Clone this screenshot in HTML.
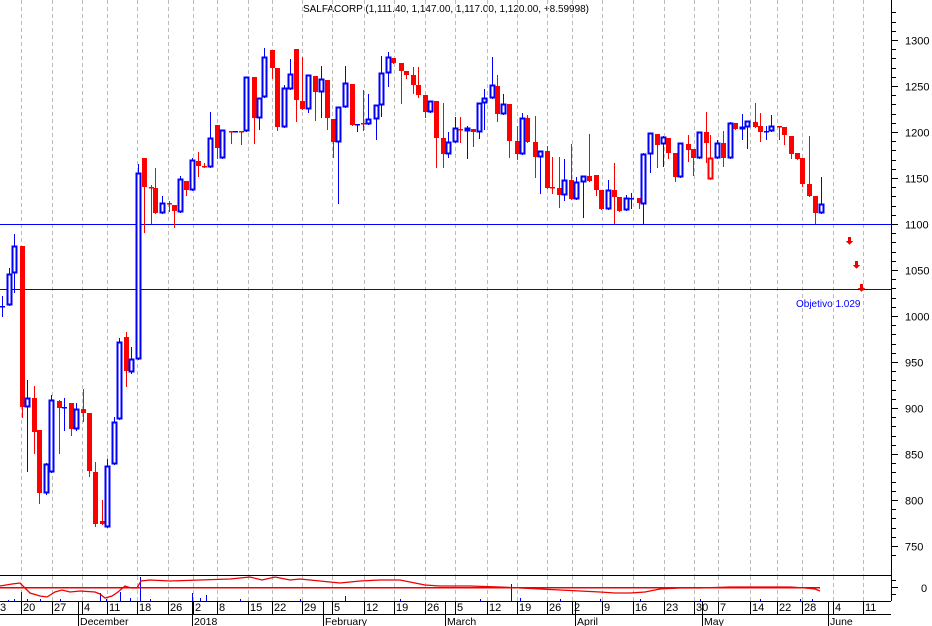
<!DOCTYPE html>
<html><head><meta charset="utf-8"><style>
html,body{margin:0;padding:0;background:#fff;width:932px;height:626px;overflow:hidden}
svg{display:block;font-family:"Liberation Sans",sans-serif}
</style></head><body>
<svg id="s" width="932" height="626" xmlns="http://www.w3.org/2000/svg" shape-rendering="crispEdges">
<text x="303" y="12" font-size="10.5" fill="#000" textLength="286" lengthAdjust="spacingAndGlyphs">SALFACORP (1,111.40, 1,147.00, 1,117.00, 1,120.00, +8.59998)</text>
<g id="grid" stroke="#bbb" stroke-dasharray="4,3"></g>
<line x1="0" y1="224.5" x2="891" y2="224.5" stroke="#0000ff"/>
<line x1="0" y1="289.5" x2="891" y2="289.5" stroke="#0000ff"/>
<g id="c"></g>
<text x="796" y="307" font-size="10" fill="#00f">Objetivo 1.029</text>
<g fill="#e00" stroke="none">
<path d="M848 237h3v4h2l-3.5 4l-3.5-4h2z"/>
<path d="M855 261h3v4h2l-3.5 4l-3.5-4h2z"/>
<path d="M860 284h3v4h2l-3.5 4l-3.5-4h2z"/>
</g>
<line x1="891.5" y1="0" x2="891.5" y2="601" stroke="#000"/>
<line x1="0" y1="575.5" x2="891" y2="575.5" stroke="#000"/>
<line x1="0" y1="601.5" x2="891" y2="601.5" stroke="#000"/>
<line x1="0" y1="614.5" x2="891" y2="614.5" stroke="#000"/>
<g id="ax" stroke="#000"></g>
<g id="lb" font-size="11" fill="#000"></g>
<g id="vol" stroke="#00f"></g>
<line x1="0" y1="587.5" x2="820" y2="587.5" stroke="#e00" stroke-width="1.5"/>
<polyline fill="none" stroke="#e00" stroke-width="1.3" shape-rendering="auto" points="0,586 12,584 20,583 24,587 30,593 40,596 47,597 55,592 62,590 70,592 80,591 95,592 100,594 105,598 112,596 118,592 125,586 131,588 137,588 141,581 150,580 170,581 200,580 230,579 250,577 262,580 275,577 290,580 300,579 320,581 340,583 360,581 380,580 400,580 415,583 425,585 440,586 470,586 500,587 520,588 540,589 560,590 580,591 600,592 615,593 630,593 645,592 660,589 680,588 700,588 730,587 760,587 790,587 805,588 815,589 820,591"/>
</svg>
<script>
var s=document.getElementById('s'),NS='http://www.w3.org/2000/svg';
function el(p,t,a,txt){var e=document.createElementNS(NS,t);for(var k in a)e.setAttribute(k,a[k]);if(txt!=null)e.textContent=txt;document.getElementById(p).appendChild(e);return e;}
var G=[21,52,82,107,137,168,193,217,248,272,302,332,364,394,425,455,487,517,547,572,602,633,664,694,718,750,777,802,833,863];
G.forEach(function(x){el('grid','line',{x1:x+.5,y1:0,x2:x+.5,y2:575});el('grid','line',{x1:x+.5,y1:576,x2:x+.5,y2:601});
el('ax','line',{x1:x+.5,y1:601,x2:x+.5,y2:614});});
var L=["20","27","4","11","18","26","2","8","15","22","29","5","12","19","26","5","12","19","26","2","9","16","23","30","7","14","22","28","4","11"];
el('lb','text',{x:0,y:611,'font-size':11},"3");
G.forEach(function(x,i){el('lb','text',{x:x+2,y:611},L[i]);});
var M=[[78,"December"],[192,"2018"],[323,"February"],[445,"March"],[575,"April"],[702,"May"],[828,"June"]];
M.forEach(function(m){el('ax','line',{x1:m[0]+.5,y1:601,x2:m[0]+.5,y2:626});el('lb','text',{x:m[0]+2,y:625,'font-size':10.5},m[1]);});
for(var p=740;p<=1330;p+=10){var y=Math.round(40+(1300-p)*0.92)+.5;var maj=p%50==0;
el('ax','line',{x1:891,y1:y,x2:maj?898:896,y2:y});
if(maj&&p>=750&&p<=1300)el('lb','text',{x:905,y:y+4},String(p));}
[580,587,594].forEach(function(y){el('ax','line',{x1:891,y1:y+.5,x2:y==587?898:896,y2:y+.5});});
el('lb','text',{x:921,y:592},"0");
var C=[
[2,306,306,296,316,'b'],[9,274,305,268,305,'b'],[14,246,273,234,292,'b'],[22,246,407,246,417,'r'],[27,398,407,380,471,'b'],
[34,398,432,386,453,'r'],[39,430,493,430,503,'r'],[46,464,493,463,494,'b'],[51,400,472,395,472,'b'],[59,401,408,400,453,'r'],
[64,407,407,398,430,'b'],[71,403,429,403,435,'r'],[76,409,429,403,430,'b'],[83,409,413,389,421,'r'],[89,413,471,413,476,'r'],
[95,472,524,462,526,'r'],[102,521,524,500,524,'r'],[107,466,527,459,527,'b'],[114,422,464,417,464,'b'],[119,342,419,338,419,'b'],
[126,337,371,332,386,'r'],[131,359,372,347,373,'b'],[138,173,359,164,359,'b'],[144,158,187,158,232,'r'],[151,187,187,185,223,'r'],
[155,188,213,168,213,'r'],[162,203,213,196,213,'b'],[169,203,203,201,211,'r'],[174,205,211,205,227,'r'],[180,179,212,176,212,'b'],
[186,181,190,181,195,'r'],[192,160,190,158,190,'b'],[198,161,166,152,176,'r'],[204,166,167,163,167,'r'],[210,138,167,112,167,'b'],
[217,125,148,125,158,'r'],[222,130,158,130,158,'b'],[231,131,131,131,143,'r'],[235,131,131,131,131,'b'],[241,131,131,131,144,'r'],
[246,77,131,77,131,'b'],[254,77,118,77,143,'r'],[259,98,118,98,129,'b'],[264,57,97,48,97,'b'],[272,50,68,50,78,'r'],
[277,68,127,68,130,'r'],[284,88,127,85,127,'b'],[290,74,89,59,89,'b'],[296,49,100,49,121,'r'],[302,101,109,57,109,'r'],
[308,75,109,75,112,'b'],[315,76,92,76,120,'r'],[321,79,92,66,117,'b'],[327,80,118,80,129,'r'],[333,119,142,119,157,'r'],
[338,107,142,107,203,'b'],[345,83,107,66,107,'b'],[352,84,125,84,125,'r'],[357,124,124,124,131,'b'],[363,123,123,90,130,'r'],
[368,119,124,94,124,'b'],[376,105,119,105,139,'b'],[381,73,105,56,116,'b'],[388,57,73,52,86,'b'],[393,58,63,58,63,'r'],
[401,63,71,63,103,'r'],[406,71,75,71,78,'r'],[413,75,85,67,93,'r'],[418,85,95,67,97,'r'],[425,95,112,95,117,'r'],
[430,101,112,101,112,'b'],[436,101,138,101,167,'r'],[443,138,154,103,167,'r'],[448,142,154,132,157,'b'],[455,128,142,117,142,'b'],
[460,129,129,117,142,'r'],[467,128,131,126,158,'b'],[473,129,132,129,146,'r'],[479,103,132,103,138,'b'],[484,98,103,89,129,'b'],
[492,85,98,57,98,'b'],[497,86,114,75,121,'r'],[503,104,114,94,114,'b'],[509,104,141,104,157,'r'],[517,141,154,126,159,'r'],
[522,118,154,113,154,'b'],[527,118,142,115,142,'r'],[535,142,157,116,177,'r'],[540,151,157,151,193,'b'],[547,151,188,146,188,'r'],
[552,187,187,157,193,'r'],[559,188,195,157,207,'r'],[564,180,195,159,200,'b'],[571,180,199,144,199,'r'],[576,182,199,177,199,'b'],
[583,176,182,176,217,'b'],[589,176,181,134,181,'r'],[596,175,190,175,195,'r'],[601,190,209,190,209,'r'],[608,190,209,180,209,'b'],
[614,190,197,163,223,'r'],[619,197,211,197,211,'r'],[626,198,210,195,210,'b'],[631,198,198,193,208,'b'],[639,198,203,198,208,'r'],
[643,154,204,153,223,'b'],[650,133,154,133,172,'b'],[657,134,145,134,167,'r'],[663,137,144,136,166,'b'],[668,138,153,138,158,'r'],
[675,153,177,153,181,'r'],[680,143,177,143,177,'b'],[688,144,150,135,161,'r'],[693,149,158,149,175,'r'],[699,132,158,132,158,'b'],
[706,132,143,112,162,'r'],[710,158,179,135,179,'h'],[717,143,158,140,158,'b'],[723,143,158,131,166,'r'],[730,123,158,122,158,'b'],
[735,123,129,123,129,'r'],[742,127,129,114,139,'b'],[747,121,127,121,148,'b'],[755,122,127,103,127,'r'],[760,126,132,113,141,'r'],
[766,131,131,126,139,'b'],[771,126,131,115,131,'b'],[779,126,126,126,139,'r'],[784,127,135,127,144,'r'],[791,136,154,136,158,'r'],
[797,153,159,153,159,'r'],[802,158,184,158,186,'r'],[809,184,196,136,196,'r'],[815,196,213,196,223,'r'],[821,204,213,177,213,'b']];
C.forEach(function(c){var x=c[0],col=c[5]=='b'?'#00f':'#f00';
el('c','line',{x1:x+.5,y1:c[3],x2:x+.5,y2:c[4]+1,stroke:col});
var h=c[2]-c[1];
if(h<2){el('c','rect',{x:x-2,y:c[1],width:5,height:1.5,fill:col});}
else if(c[5]=='r'){el('c','rect',{x:x-2,y:c[1],width:5,height:h,fill:col});}
else{el('c','rect',{x:x-1.5,y:c[1]+.5,width:4,height:h-1,fill:'#fff',stroke:col,'stroke-width':1.6});}
});
var V=[[8,600],[14,599],[21,592],[27,599],[40,599],[60,599],[100,593],[106,599],[120,592],[130,598],[140,577],[150,599],[192,593],[200,598],[206,595],[240,599],[300,599],[345,596],[400,599],[480,599],[511,584],[520,598],[560,599],[600,599],[640,599],[700,599],[760,599],[800,599],[812,599]];
V.forEach(function(v){el('vol','line',{x1:v[0]+.5,y1:601,x2:v[0]+.5,y2:v[1]});});
</script>
</body></html>
